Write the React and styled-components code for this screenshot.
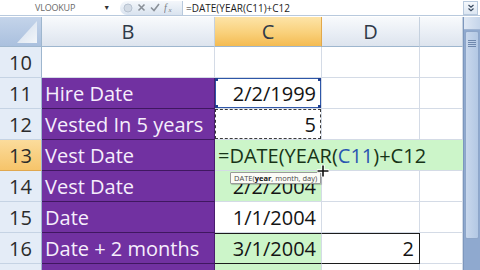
import styled, { createGlobalStyle } from 'styled-components'

const GlobalStyle = createGlobalStyle`
  html, body {
    margin: 0;
    padding: 0;
    background: #ffffff;
  }
  body {
    font-family: 'Open Sans', 'Noto Sans', sans-serif;
  }
`

const Window = styled.div`
  width: 480px;
  height: 270px;
  overflow: hidden;
  display: flex;
  flex-direction: column;
  background: #ffffff;
`

const FormulaBar = styled.div`
  height: 15px;
  display: flex;
  align-items: center;
  background: #ffffff;
  border-bottom: 1px solid #b8c9dd;
  font-size: 10px;
  flex-shrink: 0;
`

const NameBox = styled.div`
  width: 110px;
  height: 100%;
  display: flex;
  align-items: center;
  justify-content: space-between;
  padding: 0 0 0 35px;
  box-sizing: border-box;
  color: #6a6a6a;
  font-size: 9px;
  letter-spacing: -0.2px;

  .arrow {
    font-size: 7px;
    color: #333;
    margin-right: 0;
  }
`

const ButtonPill = styled.div`
  margin-left: 10px;
  width: 63px;
  height: 14px;
  display: flex;
  align-items: center;
  gap: 4px;
  padding-left: 3px;
  box-sizing: border-box;
  border-radius: 8px 0 0 8px;
  background: linear-gradient(#f4f7fb, #d9e3ef);
  border-right: 1px solid #b8c9dd;
`

const Formula = styled.div`
  flex: 1;
  padding-left: 3px;
  color: #1c1c1c;
  font-size: 10px;
  white-space: nowrap;
`

const ExpandButton = styled.div`
  width: 15px;
  height: 14px;
  margin-right: 2px;
  display: flex;
  align-items: center;
  justify-content: center;
  border: 1px solid #b8c9dd;
  box-sizing: border-box;
  background: linear-gradient(#f5f8fc, #dce6f2);
`

const Body = styled.div`
  flex: 1;
  display: flex;
  margin-top: 1px;
  min-height: 0;
`

const Grid = styled.div`
  position: relative;
  display: grid;
  grid-template-columns: 42px 173px 107px 98px 43px;
  grid-template-rows: 30px repeat(8, 31px);
  flex-shrink: 0;
`

const Corner = styled.div`
  position: relative;
  background: linear-gradient(#c4d4ea, #aac0de);
  border-right: 1px solid #9eb6ce;
  border-bottom: 1px solid #9eb6ce;
  box-sizing: border-box;

  &::after {
    content: '';
    position: absolute;
    right: 4px;
    bottom: 3px;
    width: 20px;
    height: 22px;
    background: linear-gradient(135deg, #cfdcec, #f3f6fa);
    clip-path: polygon(100% 0, 100% 100%, 0 100%);
  }
`

const ColHead = styled.div`
  display: flex;
  align-items: center;
  justify-content: center;
  font-size: 20px;
  color: #2f3a48;
  background: ${(p) =>
    p.$active
      ? 'linear-gradient(#fde4a8, #f9d07a 55%, #f4bb52)'
      : 'linear-gradient(#f8fafc, #e9eef5 55%, #dde4ee)'};
  border-right: 1px solid ${(p) => (p.$active ? '#e2a84a' : '#c5d1df')};
  border-bottom: 1px solid #9eb6ce;
  box-sizing: border-box;
`

const RowHead = styled.div`
  display: flex;
  align-items: center;
  justify-content: center;
  font-size: 20px;
  color: #2b2b2b;
  background: ${(p) =>
    p.$active ? 'linear-gradient(#fbdc9c, #f6c46a)' : '#e4ecf7'};
  border-right: 1px solid #9eb6ce;
  border-bottom: 1px solid ${(p) => (p.$active ? '#e0a850' : '#c5d3e4')};
  box-sizing: border-box;
`

const Cell = styled.div`
  position: relative;
  display: flex;
  align-items: center;
  justify-content: ${(p) => (p.$right ? 'flex-end' : 'flex-start')};
  padding: 0 ${(p) => (p.$right ? '5px' : '3px')};
  font-size: 20px;
  white-space: nowrap;
  overflow: hidden;
  box-sizing: border-box;
  color: ${(p) => (p.$tone === 'label' ? '#f6eefc' : '#141414')};
  background: ${(p) =>
    p.$tone === 'label' ? '#7131a1' : p.$tone === 'green' ? '#ccf5c9' : '#ffffff'};
  border-right: 1px solid
    ${(p) => (p.$boxRight ? '#1c1c1c' : p.$tone === 'label' ? '#4a1d6e' : '#d4dbe6')};
  border-bottom: 1px solid
    ${(p) => (p.$boxBottom ? '#1c1c1c' : p.$tone === 'label' ? '#3f1760' : '#d4dbe6')};
  border-top: ${(p) => (p.$boxTop ? '1px solid #1c1c1c' : 'none')};
  grid-column: ${(p) => p.$span || 'auto'};
`

const EditCell = styled(Cell)`
  overflow: visible;
  padding-left: 3px;
  color: #173417;
  background: #ccf5c9;
  border-right: none;

  .ref {
    color: #2855b0;
  }
`

const RangeBox = styled.div`
  position: absolute;
  inset: 0 0 0 0;
  border: 1px solid #2e56a8;
  pointer-events: none;

  span {
    position: absolute;
    width: 4px;
    height: 4px;
    background: #1f3f8f;
  }
  .tl { left: -2px; top: -2px; }
  .tr { right: -2px; top: -2px; }
  .bl { left: -2px; bottom: -2px; }
  .br { right: -2px; bottom: -2px; }
`

const MarchingAnts = styled.div`
  position: absolute;
  inset: 0;
  border: 1px dashed #3a3a3a;
  pointer-events: none;
`

const Tooltip = styled.div`
  position: absolute;
  left: 230px;
  top: 155px;
  height: 10px;
  padding: 0 3px;
  display: flex;
  align-items: center;
  font-size: 7.5px;
  color: #4a4a4a;
  background: #fbfbf6;
  border: 1px solid #9a9a9a;
  border-radius: 1px;
  box-shadow: 1px 1px 1px rgba(0, 0, 0, 0.2);
  white-space: nowrap;

  b {
    color: #111;
  }
`

const Cursor = styled.svg`
  position: absolute;
  left: 316px;
  top: 147px;
`

const Scrollbar = styled.div`
  flex: 1;
  display: flex;
  flex-direction: column;
  background: #8fa9cf;
  border-left: 1px solid #7d97bd;
`

const ScrollArrow = styled.div`
  height: 12px;
  background: linear-gradient(90deg, #dfe8f4, #c5d5ea);
  border-bottom: 1px solid #9fb4d2;
`

const Thumb = styled.div`
  height: 198px;
  margin: 1px 1px 0 1px;
  background: linear-gradient(90deg, #c8d7ec, #b3c8e4);
  border: 1px solid #8ea6c9;
  border-radius: 2px;
  display: flex;
  flex-direction: column;
  align-items: center;
  padding-top: 8px;
  gap: 1px;

  i {
    width: 8px;
    height: 1px;
    background: #6f88ad;
  }
`

const XIcon = () => (
  <svg width="9" height="9" viewBox="0 0 9 9">
    <path d="M1.5 1.5 L7.5 7.5 M7.5 1.5 L1.5 7.5" stroke="#8a9098" strokeWidth="1.6" />
  </svg>
)

const CheckIcon = () => (
  <svg width="10" height="9" viewBox="0 0 10 9">
    <path d="M1 4.5 L4 7.5 L9 1" stroke="#8a9098" strokeWidth="1.6" fill="none" />
  </svg>
)

const FxIcon = () => (
  <svg width="12" height="11" viewBox="0 0 12 11">
    <text x="0" y="9" fontSize="10" fontStyle="italic" fontFamily="Liberation Serif, serif" fill="#7a7f86">
      f
    </text>
    <text x="4.5" y="10" fontSize="7" fontStyle="italic" fontFamily="Liberation Serif, serif" fill="#7a7f86">
      x
    </text>
  </svg>
)

const rows = [
  { n: 11, label: 'Hire Date', c: '2/2/1999', tone: 'white', d: '' },
  { n: 12, label: 'Vested In 5 years', c: '5', tone: 'white', d: '' },
  { n: 13, label: 'Vest Date', edit: true },
  { n: 14, label: 'Vest Date', c: '2/2/2004', tone: 'green', d: '' },
  { n: 15, label: 'Date', c: '1/1/2004', tone: 'white', d: '' },
  { n: 16, label: 'Date + 2 months', c: '3/1/2004', tone: 'green', d: '2', boxed: true },
  { n: 17, label: 'Date + 2 years', c: '3/1/2006', tone: 'green', d: '2' },
]

const App = () => {
  return (
    <Window>
      <GlobalStyle />
      <FormulaBar>
        <NameBox>
          VLOOKUP
          <span className="arrow">▼</span>
        </NameBox>
        <ButtonPill>
          <svg width="10" height="10" viewBox="0 0 10 10">
            <circle cx="5" cy="5" r="4" fill="#d3dbe5" stroke="#b7c2d0" />
          </svg>
          <XIcon />
          <CheckIcon />
          <FxIcon />
        </ButtonPill>
        <Formula>=DATE(YEAR(C11)+C12</Formula>
        <ExpandButton>
          <svg width="8" height="8" viewBox="0 0 8 8">
            <path d="M1.5 1 L4 3.2 L6.5 1 M1.5 4.5 L4 6.7 L6.5 4.5" stroke="#3a4a60" strokeWidth="1.2" fill="none" />
          </svg>
        </ExpandButton>
      </FormulaBar>

      <Body>
        <Grid>
          <Corner />
          <ColHead>B</ColHead>
          <ColHead $active>C</ColHead>
          <ColHead>D</ColHead>
          <ColHead />

          <RowHead>10</RowHead>
          <Cell />
          <Cell />
          <Cell />
          <Cell />

          {rows.map((r) =>
            r.edit ? (
              <>
                <RowHead key={`h${r.n}`} $active>
                  {r.n}
                </RowHead>
                <Cell $tone="label">{r.label}</Cell>
                <EditCell $span="3 / span 3">
                  =DATE(YEAR(<span className="ref">C11</span>)+C12
                </EditCell>
              </>
            ) : (
              <>
                <RowHead key={`h${r.n}`}>{r.n}</RowHead>
                <Cell $tone="label">{r.label}</Cell>
                <Cell $tone={r.tone} $right $boxTop={r.boxed} $boxBottom={r.boxed}>
                  {r.c}
                  {r.n === 11 && (
                    <RangeBox>
                      <span className="tl" />
                      <span className="tr" />
                      <span className="bl" />
                      <span className="br" />
                    </RangeBox>
                  )}
                  {r.n === 12 && <MarchingAnts />}
                </Cell>
                <Cell $right $boxTop={r.boxed} $boxBottom={r.boxed} $boxRight={r.boxed}>
                  {r.d}
                </Cell>
                <Cell />
              </>
            )
          )}

          <Tooltip>
            DATE(<b>year</b>, month, day)
          </Tooltip>
          <Cursor width="14" height="14" viewBox="0 0 14 14">
            <path d="M7 1 V13 M1 7 H13" stroke="#ffffff" strokeWidth="3.4" />
            <path d="M7 1.5 V12.5 M1.5 7 H12.5" stroke="#111111" strokeWidth="1.6" />
          </Cursor>
        </Grid>
        <Scrollbar>
          <ScrollArrow />
          <Thumb>
            <i />
            <i />
            <i />
            <i />
          </Thumb>
        </Scrollbar>
      </Body>
    </Window>
  )
}

export default App
